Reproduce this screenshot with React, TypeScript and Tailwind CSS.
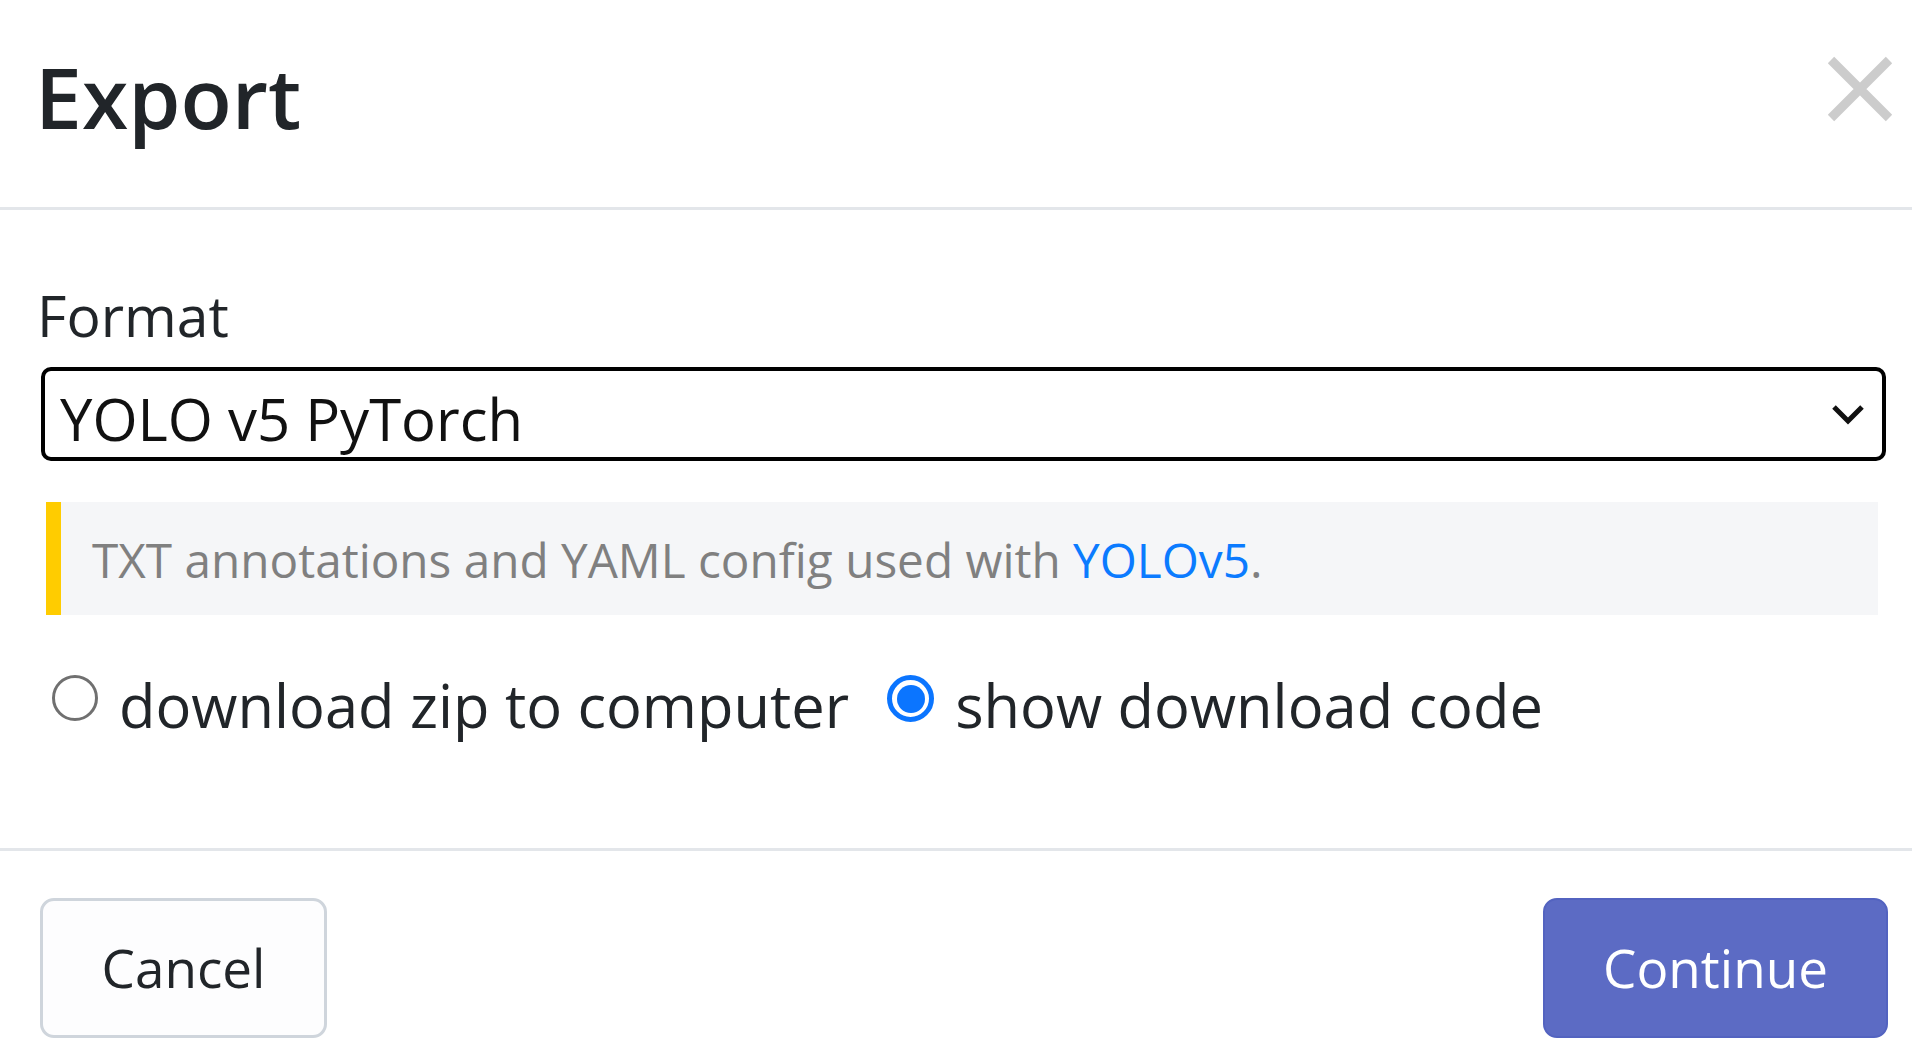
import { useState } from "react";

const font = { fontFamily: '"Open Sans", "Noto Sans", sans-serif' };

function CloseIcon() {
  return (
    <svg width="66" height="66" viewBox="0 0 66 66" aria-hidden="true">
      <path d="M4 4 L62 62 M62 4 L4 62" stroke="#cccccc" strokeWidth="9" fill="none" />
    </svg>
  );
}

function Radio({ checked, label, onClick }: { checked: boolean; label: string; onClick: () => void }) {
  return (
    <label className="flex items-start cursor-pointer" onClick={onClick}>
      {checked ? (
        <span className="mt-[4px] w-[47px] h-[47px] rounded-full border-[5px] border-[#0b75ff] flex items-center justify-center shrink-0">
          <span className="w-[28px] h-[28px] rounded-full bg-[#0b75ff]" />
        </span>
      ) : (
        <span className="mt-[4px] w-[46px] h-[46px] rounded-full border-[3px] border-[#707070] shrink-0" />
      )}
      <span className="ml-[21px] text-[59.6px] leading-[1.15] text-[#212529]">{label}</span>
    </label>
  );
}

export default function App() {
  const [mode, setMode] = useState<"zip" | "code">("code");

  return (
    <div className="w-full h-[1062px] overflow-hidden bg-white" style={font}>
      {/* header */}
      <div className="h-[207px] flex items-center justify-between pl-[35px] pr-[19px] pb-[14px]">
        <h4 className="text-[84px] leading-none font-semibold text-[#212529]">Export</h4>
        <button className="mb-[16px]">
          <CloseIcon />
        </button>
      </div>
      <div className="h-[3px] bg-[#e3e6ea]" />

      {/* body */}
      <div className="pl-[37px] pr-[26px] pt-[71px]">
        <label className="block text-[57px] leading-[1.2] text-[#212529]">Format</label>
        <div className="mt-[18px] ml-[4px] h-[94px] border-[4px] border-black rounded-[10px] flex items-center justify-between pl-[15px] pr-[16px]">
          <span className="text-[58px] leading-none pt-[10px] text-[#111]">YOLO v5 PyTorch</span>
          <svg width="36" height="24" viewBox="0 0 36 24" aria-hidden="true">
            <path d="M4 5 L18 19 L32 5" stroke="#111" strokeWidth="5" fill="none" />
          </svg>
        </div>

        <div className="mt-[41px] ml-[9px] mr-[8px] h-[113px] bg-[#f5f6f8] border-l-[15px] border-[#ffcc00] flex items-center pl-[31px]">
          <p className="text-[47.7px] leading-none pt-[2px] text-[#808080]">
            TXT annotations and YAML config used with{" "}
            <a className="text-[#0b7bff]" href="#">
              YOLOv5
            </a>
            .
          </p>
        </div>

        <div className="mt-[56px] ml-[15px] flex items-start gap-[38px]">
          <Radio checked={mode === "zip"} label="download zip to computer" onClick={() => setMode("zip")} />
          <Radio checked={mode === "code"} label="show download code" onClick={() => setMode("code")} />
        </div>
      </div>

      <div className="mt-[108px] h-[3px] bg-[#e3e6ea]" />

      {/* footer */}
      <div className="flex items-center justify-between pl-[40px] pr-[24px] pt-[47px]">
        <button className="w-[287px] h-[140px] rounded-[14px] border-[3px] border-[#cfd5dc] bg-[#fdfdfe] text-[53px] text-[#212529]">
          Cancel
        </button>
        <button className="w-[345px] h-[140px] rounded-[14px] border-[2px] border-[#5363c0] bg-[#5c6bc4] text-[53px] text-white">
          Continue
        </button>
      </div>
    </div>
  );
}
